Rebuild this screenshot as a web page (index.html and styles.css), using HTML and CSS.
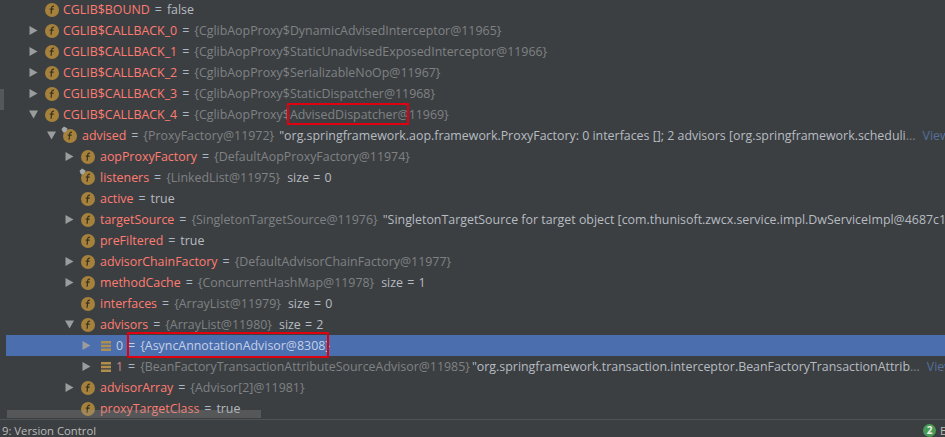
FILE: index.html
```html
<!DOCTYPE html>
<html lang="en">
<head>
<meta charset="utf-8">
<title>Debugger variables</title>
<link rel="stylesheet" href="styles.css">
</head>
<body>
<svg class="defs" width="0" height="0" aria-hidden="true">
  <symbol id="right" viewBox="0 0 11 11"><path d="M1.5 1 L9.5 5.5 L1.5 10 Z" fill="#9a9c9e"/></symbol>
  <symbol id="down" viewBox="0 0 11 11"><path d="M1 1.5 L10 1.5 L5.5 9.5 Z" fill="#9a9c9e"/></symbol>
  <symbol id="field" viewBox="0 0 14 14"><circle cx="7" cy="7" r="7" fill="#a5813c"/><path d="M9 3.4 C7.6 2.9 6.8 3.6 6.7 4.8 L6.1 10.8 M4.7 6 L8.7 6" fill="none" stroke="#3a3222" stroke-width="1.25"/></symbol>
  <symbol id="pin" viewBox="0 0 7 7"><path d="M0.5 3 L3 0.5 L6.5 2.5 L5 6 L2 6.5 Z" fill="#a4a8ab"/></symbol>
  <symbol id="lines" viewBox="0 0 10 10"><path d="M0 0h10v2.4H0zM0 3.8h10v2.4H0zM0 7.6h10V10H0z" fill="#b08f4e"/></symbol>
</svg>
<main class="window">
  <div class="tree">
    <div class="row d1"><span class="tw"></span><svg class="ic"><use href="#field"/></svg><span class="nm">CGLIB$BOUND</span><span class="eq">=</span><span class="val">false</span></div>
    <div class="row d1"><svg class="tw"><use href="#right"/></svg><svg class="ic"><use href="#field"/></svg><span class="nm">CGLIB$CALLBACK_0</span><span class="eq">=</span><span class="ref">{CglibAopProxy$DynamicAdvisedInterceptor@11965}</span></div>
    <div class="row d1"><svg class="tw"><use href="#right"/></svg><svg class="ic"><use href="#field"/></svg><span class="nm">CGLIB$CALLBACK_1</span><span class="eq">=</span><span class="ref">{CglibAopProxy$StaticUnadvisedExposedInterceptor@11966}</span></div>
    <div class="row d1"><svg class="tw"><use href="#right"/></svg><svg class="ic"><use href="#field"/></svg><span class="nm">CGLIB$CALLBACK_2</span><span class="eq">=</span><span class="ref">{CglibAopProxy$SerializableNoOp@11967}</span></div>
    <div class="row d1"><svg class="tw"><use href="#right"/></svg><svg class="ic"><use href="#field"/></svg><span class="nm">CGLIB$CALLBACK_3</span><span class="eq">=</span><span class="ref">{CglibAopProxy$StaticDispatcher@11968}</span></div>
    <div class="row d1"><svg class="tw"><use href="#down"/></svg><svg class="ic"><use href="#field"/></svg><span class="nm">CGLIB$CALLBACK_4</span><span class="eq">=</span><span class="ref">{CglibAopProxy$AdvisedDispatcher@11969}</span></div>
    <div class="row d2"><svg class="tw"><use href="#down"/></svg><span class="icw"><svg class="ic"><use href="#field"/></svg><svg class="pin"><use href="#pin"/></svg></span><span class="nm">advised</span><span class="eq">=</span><span class="ref">{ProxyFactory@11972}</span><span class="val long">"org.springframework.aop.framework.ProxyFactory: 0 interfaces []; 2 advisors [org.springframework.scheduli<span class="dots">...</span></span><span class="view">View</span></div>
    <div class="row d3"><svg class="tw"><use href="#right"/></svg><svg class="ic"><use href="#field"/></svg><span class="nm">aopProxyFactory</span><span class="eq">=</span><span class="ref">{DefaultAopProxyFactory@11974}</span></div>
    <div class="row d3"><span class="tw"></span><span class="icw"><svg class="ic"><use href="#field"/></svg><svg class="pin"><use href="#pin"/></svg></span><span class="nm">listeners</span><span class="eq">=</span><span class="ref">{LinkedList@11975}</span><span class="val size">size = 0</span></div>
    <div class="row d3"><span class="tw"></span><svg class="ic"><use href="#field"/></svg><span class="nm">active</span><span class="eq">=</span><span class="val">true</span></div>
    <div class="row d3"><svg class="tw"><use href="#right"/></svg><svg class="ic"><use href="#field"/></svg><span class="nm">targetSource</span><span class="eq">=</span><span class="ref">{SingletonTargetSource@11976}</span><span class="val long">"SingletonTargetSource for target object [com.thunisoft.zwcx.service.impl.DwServiceImpl@4687c1</span></div>
    <div class="row d3"><span class="tw"></span><svg class="ic"><use href="#field"/></svg><span class="nm">preFiltered</span><span class="eq">=</span><span class="val">true</span></div>
    <div class="row d3"><svg class="tw"><use href="#right"/></svg><svg class="ic"><use href="#field"/></svg><span class="nm">advisorChainFactory</span><span class="eq">=</span><span class="ref">{DefaultAdvisorChainFactory@11977}</span></div>
    <div class="row d3"><svg class="tw"><use href="#right"/></svg><svg class="ic"><use href="#field"/></svg><span class="nm">methodCache</span><span class="eq">=</span><span class="ref">{ConcurrentHashMap@11978}</span><span class="val size">size = 1</span></div>
    <div class="row d3"><span class="tw"></span><svg class="ic"><use href="#field"/></svg><span class="nm">interfaces</span><span class="eq">=</span><span class="ref">{ArrayList@11979}</span><span class="val size">size = 0</span></div>
    <div class="row d3"><svg class="tw"><use href="#down"/></svg><svg class="ic"><use href="#field"/></svg><span class="nm">advisors</span><span class="eq">=</span><span class="ref">{ArrayList@11980}</span><span class="val size">size = 2</span></div>
    <div class="row d4 selected"><svg class="tw"><use href="#right"/></svg><svg class="ic small"><use href="#lines"/></svg><span class="idx">0</span><span class="eq">=</span><span class="ref">{AsyncAnnotationAdvisor@8308}</span></div>
    <div class="row d4"><svg class="tw"><use href="#right"/></svg><svg class="ic small"><use href="#lines"/></svg><span class="nm dim">1</span><span class="eq">=</span><span class="ref">{BeanFactoryTransactionAttributeSourceAdvisor@11985}</span><span class="val long">"org.springframework.transaction.interceptor.BeanFactoryTransactionAttrib<span class="dots">...</span></span><span class="view">View</span></div>
    <div class="row d3"><svg class="tw"><use href="#right"/></svg><svg class="ic"><use href="#field"/></svg><span class="nm">advisorArray</span><span class="eq">=</span><span class="ref">{Advisor[2]@11981}</span></div>
    <div class="row d3"><span class="tw"></span><svg class="ic"><use href="#field"/></svg><span class="nm">proxyTargetClass</span><span class="eq">=</span><span class="val">true</span></div>
    <div class="thumb"></div>
    <div class="stub"></div>
    <div class="mark mark-a"></div>
    <div class="mark mark-b"></div>
  </div>
  <footer class="status">
    <span class="tool">9: Version Control</span>
    <span class="event"><span class="badge">2</span><span>E</span></span>
  </footer>
</main>
</body>
</html>
```
FILE: styles.css
```css
html, body {
  margin: 0;
  padding: 0;
  background: #3c3f41;
}
.defs {
  position: absolute;
}
.window {
  width: 945px;
  height: 437px;
  display: flex;
  flex-direction: column;
  overflow: hidden;
  font-family: "Open Sans", "Noto Sans", sans-serif;
  font-size: 12.4px;
  color: #bbbbbb;
  background: #3c3f41;
}
.tree {
  position: relative;
  flex: 1;
  min-height: 0;
  overflow: hidden;
  margin-top: -1px;
}
.row {
  height: 21px;
  display: flex;
  align-items: center;
  white-space: pre;
  margin-left: 6px;
}
.d1 { padding-left: 22px; }
.d2 { padding-left: 40px; }
.d3 { padding-left: 58px; }
.d4 { padding-left: 75px; }
.tw {
  flex: none;
  width: 11px;
  height: 11px;
  margin-right: 6px;
}
.ic {
  flex: none;
  width: 14px;
  height: 14px;
  margin-right: 4px;
}
.d2 .ic, .d3 .ic {
  margin-right: 5px;
}
.d4 .ic.small {
  width: 10px;
  height: 10px;
  margin: 0 5px 0 3px;
}
.icw {
  position: relative;
  display: flex;
  flex: none;
}
.pin {
  position: absolute;
  left: -2px;
  top: -3px;
  width: 7px;
  height: 7px;
}
.nm { color: #ff7c73; }
.nm.dim { color: #c98a8f; }
.idx { color: #c2cde0; }
.eq {
  color: #a9b7c6;
  margin: 0 5px;
}
.ref { color: #7f8285; }
.val { color: #b6bcc2; }
.long { margin-left: 5px; }
.d4 .long { margin-left: 2px; }
.size {
  margin-left: 7px;
  word-spacing: 1px;
}
.dots { color: #7f8285; }
.view { color: #54709b; margin-left: 7px; }
.selected {
  background: #4b6eaf;
}
.selected .ref, .selected .eq { color: #c5d0e4; }
.thumb {
  position: absolute;
  left: 7px;
  top: 411px;
  width: 254px;
  height: 8px;
  background: rgba(150, 150, 150, 0.28);
}
.stub {
  position: absolute;
  left: 0;
  top: 90px;
  width: 4px;
  height: 21px;
  background: #55585a;
}
.mark {
  position: absolute;
  border: 2px solid #e0000f;
}
.mark-a {
  left: 287px;
  top: 104px;
  width: 118px;
  height: 18px;
}
.mark-b {
  left: 127px;
  top: 333px;
  width: 198px;
  height: 22px;
}
.status {
  flex: none;
  height: 17px;
  border-top: 1px solid #505254;
  display: flex;
  justify-content: space-between;
  align-items: flex-end;
  font-size: 11.3px;
  line-height: 12px;
  color: #bbbbbb;
}
.tool {
  padding-left: 2px;
}
.event {
  display: flex;
  align-items: center;
  gap: 4px;
  width: 22px;
  overflow: hidden;
}
.badge {
  flex: none;
  width: 13px;
  height: 13px;
  border-radius: 50%;
  background: #499c54;
  color: #eeeeee;
  font-size: 10px;
  font-weight: 700;
  line-height: 13px;
  text-align: center;
}
```
